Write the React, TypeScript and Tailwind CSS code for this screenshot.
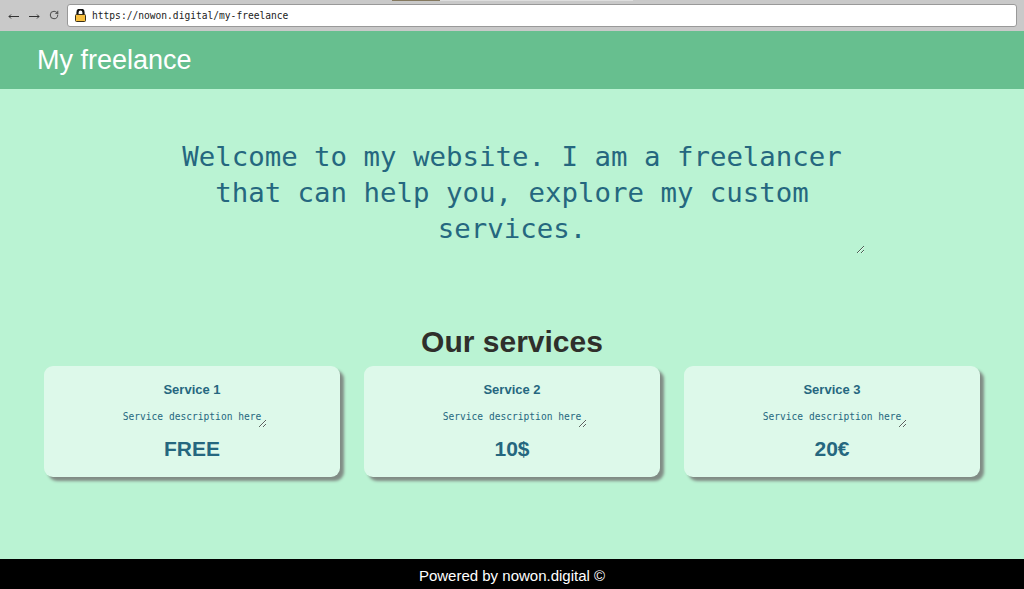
import React from 'react';
import { RotateCw } from 'lucide-react';

const sans = "font-['Liberation_Sans',Arial,sans-serif]";
const mono = "font-['DejaVu_Sans_Mono',monospace]";

const services = [
  { name: 'Service 1', price: 'FREE' },
  { name: 'Service 2', price: '10$' },
  { name: 'Service 3', price: '20€' },
];

const BrowserBar: React.FC = () => (
  <div className="relative h-[31px] shrink-0 bg-[#c9c9c9] flex items-center pl-[8px] pr-[7px] pb-[1px]">
    <div className="absolute top-0 left-[392px] w-[48px] h-[1px] bg-[#85795f]" />
    <div className="absolute top-0 left-[440px] w-[193px] h-[1px] bg-[#dedede]" />
    <svg width="11" height="7" viewBox="0 0 11 7" className="text-[#333] mr-[10px] mt-[2px]">
      <path d="M11 3.5H1M3 1.5L1 3.5L3 5.5" fill="none" stroke="currentColor" strokeWidth="1" />
    </svg>
    <svg width="11" height="7" viewBox="0 0 11 7" className="text-[#333] mr-[9px] mt-[2px]">
      <path d="M0 3.5H10M8 1.5L10 3.5L8 5.5" fill="none" stroke="currentColor" strokeWidth="1" />
    </svg>
    <RotateCw size={10} strokeWidth={2} className="text-[#333] mr-[8px] mb-[1px]" />
    <div className="flex-1 h-[23px] bg-white border border-[#999] rounded-[3px] flex items-center pl-[7px]">
      <svg width="11" height="13" viewBox="0 0 11 13" className="mr-[6px]">
        <path d="M2.5 6V3.5a3 3 0 0 1 6 0V6" fill="none" stroke="#111" strokeWidth="2.2" />
        <rect x="0.5" y="5.5" width="10" height="7" rx="1" fill="#f8bf3f" stroke="#3a3018" strokeWidth="1" />
      </svg>
      <span className={`${mono} text-[9.6px] text-[#222] mt-[2px]`}>https://nowon.digital/my-freelance</span>
    </div>
  </div>
);

const ServiceCard: React.FC<{ name: string; price: string }> = ({ name, price }) => (
  <div className="w-[296px] h-[111px] rounded-[9px] bg-[#ddf9ea] shadow-[4px_4px_3px_#808c85] flex flex-col items-center text-[#25677f]">
    <h3 className={`${sans} font-bold text-[13px] leading-[16px] mt-[16px]`}>{name}</h3>
    <textarea
      readOnly
      defaultValue="Service description here"
      className={`${mono} resize text-center text-[9.6px] leading-[12px] w-[149px] h-[22px] mt-[8px] pt-[5px] bg-transparent outline-none overflow-hidden text-[#25677f]`}
    />
    <div className={`${sans} font-bold text-[21px] leading-[24px] mt-[9px]`}>{price}</div>
  </div>
);

const App: React.FC = () => {
  return (
    <div className={`${sans} h-[589px] flex flex-col overflow-hidden bg-[#baf3d3]`}>
      <BrowserBar />
      <header className="h-[58px] shrink-0 bg-[#67bf8f] flex items-center pl-[37px]">
        <h1 className="text-white text-[27px] leading-[32px]">My freelance</h1>
      </header>
      <main className="flex-1 flex flex-col items-center">
        <textarea
          readOnly
          defaultValue="Welcome to my website. I am a freelancer that can help you, explore my custom services."
          className={`${mono} resize text-center text-[27.4px] leading-[36px] text-[#25677f] w-[706px] h-[123px] mt-[42px] pt-[8px] bg-transparent outline-none overflow-hidden`}
        />
        <h2 className="text-[#2f2f2b] font-bold text-[30px] leading-[36px] mt-[70px]">Our services</h2>
        <div className="flex gap-[24px] mt-[6px]">
          {services.map((s) => (
            <ServiceCard key={s.name} name={s.name} price={s.price} />
          ))}
        </div>
      </main>
      <footer className="h-[30px] shrink-0 bg-black flex items-center justify-center text-white text-[15px] pt-[4px]">
        Powered by nowon.digital ©
      </footer>
    </div>
  );
};

export default App;
